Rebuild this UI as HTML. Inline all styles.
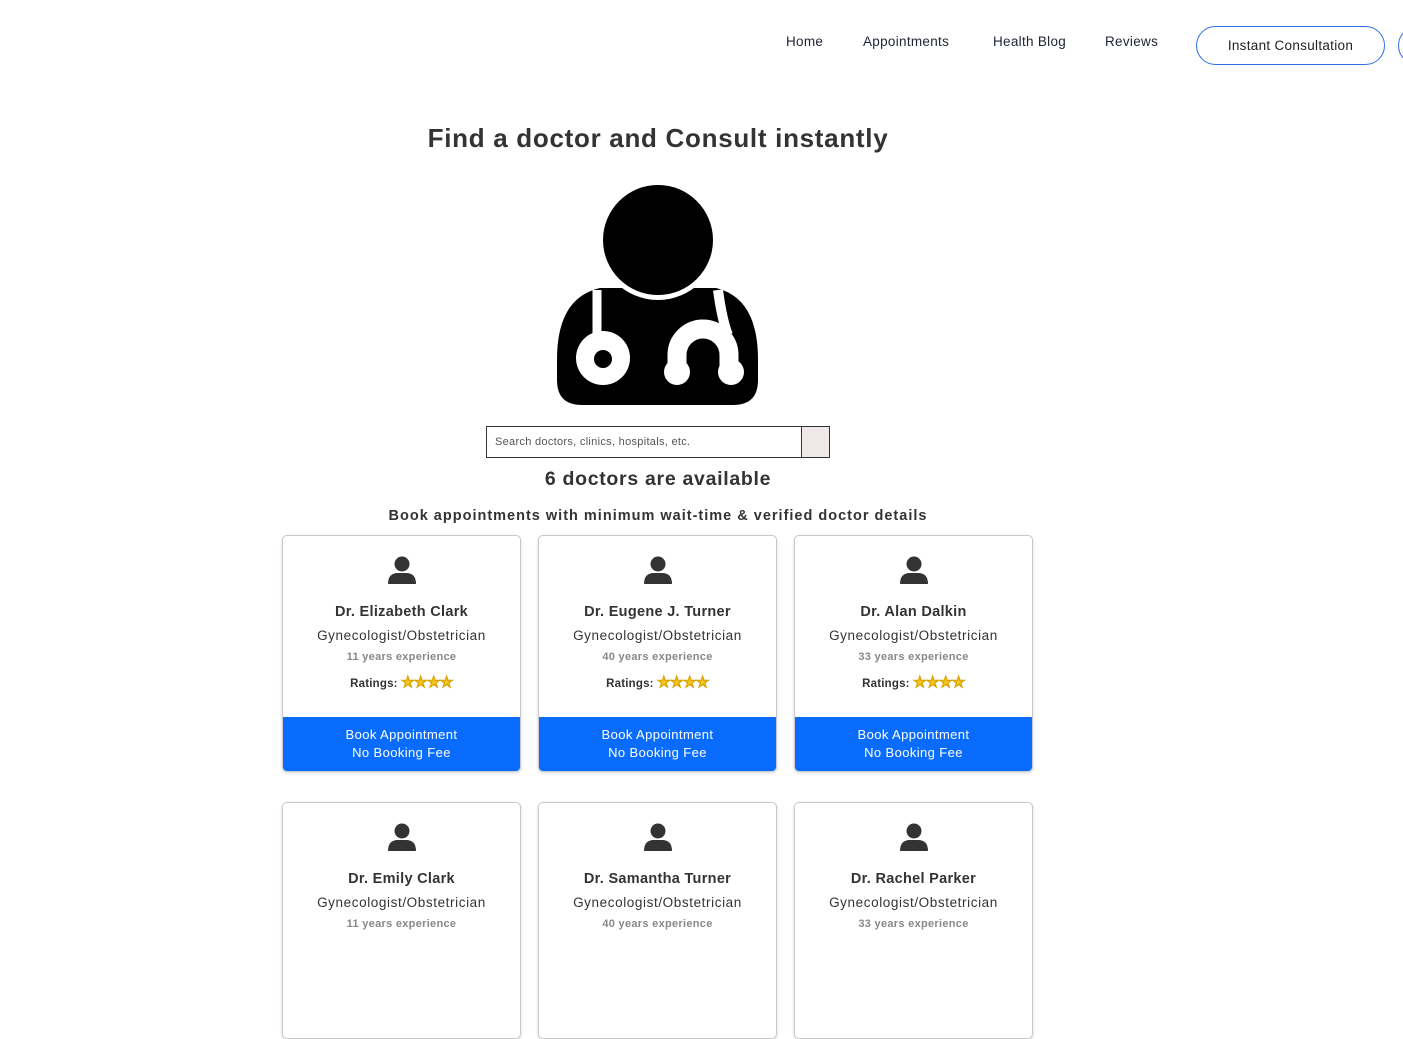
<!DOCTYPE html>
<html><head><meta charset="utf-8">
<style>
*{margin:0;padding:0;box-sizing:border-box}
body{width:1403px;height:930px;overflow:hidden;background:#fff;font-family:"Liberation Sans",sans-serif;color:#333;position:relative}
.nav a{position:absolute;top:34px;font-size:13.5px;color:#1e2433;text-decoration:none;letter-spacing:.3px}
.btn1{position:absolute;left:1196px;top:26px;width:189px;height:39px;border:1.3px solid #2f6fe6;border-radius:20px;font-size:13.5px;color:#222;text-align:center;line-height:37px;letter-spacing:.3px}
.btn2{position:absolute;left:1398px;top:26px;width:40px;height:39px;border:1.3px solid #2f6fe6;border-radius:20px}
h1{position:absolute;top:123px;left:0;width:1316px;text-align:center;font-size:26px;font-weight:bold;color:#333;letter-spacing:.7px}
.search{position:absolute;left:486px;top:426px;width:316px;height:32px;border:1px solid #333;font-size:11px;color:#555;padding:9px 8px;letter-spacing:.3px}
.sbtn{position:absolute;left:801px;top:426px;width:29px;height:32px;border:1px solid #333;background:#eee8e8}
.avail{position:absolute;top:468px;left:0;width:1316px;text-align:center;font-size:19.5px;font-weight:bold;color:#333;letter-spacing:.7px}
.sub{position:absolute;top:508px;left:0;width:1316px;text-align:center;font-size:14.5px;font-weight:bold;color:#333;letter-spacing:1px}
.card{position:absolute;width:239px;height:237px;border:1px solid #c8c8c8;border-radius:5px;box-shadow:0 1px 3px rgba(0,0,0,.15);text-align:center;overflow:hidden}
.card svg{position:absolute;left:105px;top:20px}
.nm{position:absolute;top:68px;width:100%;font-size:14.5px;font-weight:bold;color:#333;letter-spacing:.3px}
.sp{position:absolute;top:92px;width:100%;font-size:13.5px;color:#333;letter-spacing:.6px}
.ex{position:absolute;top:115px;width:100%;font-size:11px;font-weight:bold;color:#888;letter-spacing:.3px}
.rt{position:absolute;top:137px;width:100%;font-size:11.5px;font-weight:bold;color:#333;letter-spacing:.2px}
.rt span{color:#f5c518;font-size:15px;-webkit-text-stroke:.6px #d9a400;letter-spacing:-.5px}
.bk{position:absolute;top:181px;left:0;width:100%;height:55px;background:#0a6cff;color:#fff;font-size:13px;line-height:18px;padding-top:9px;border-radius:0 0 4px 4px;letter-spacing:.4px}
</style></head><body>
<div class="nav"><a style="left:786px">Home</a><a style="left:863px">Appointments</a><a style="left:993px">Health Blog</a><a style="left:1105px">Reviews</a></div>
<div class="btn1">Instant Consultation</div><div class="btn2"></div>
<h1>Find a doctor and Consult instantly</h1>
<svg style="position:absolute;left:550px;top:180px" width="220" height="230" viewBox="550 180 220 230">
<path d="M557,360 C557,320 570,295 600,288 L716,288 C745,295 758,320 758,360 L758,380 Q758,405 733,405 L582,405 Q557,405 557,380 Z" fill="#000"/>
<circle cx="658" cy="240" r="60" fill="#fff"/>
<circle cx="658" cy="240" r="55" fill="#000"/>
<path d="M597,290 V338" stroke="#fff" stroke-width="9"/>
<circle cx="603" cy="358" r="27" fill="#fff"/>
<circle cx="603" cy="359" r="9" fill="#000"/>
<path d="M718,290 Q722,320 728,335" stroke="#fff" stroke-width="10" fill="none"/>
<path d="M677,372 V355 A26,26 0 0 1 729,355 V372" stroke="#fff" stroke-width="19" fill="none"/>
<circle cx="677" cy="372" r="13" fill="#fff"/>
<circle cx="731" cy="372" r="13" fill="#fff"/>
</svg>
<div class="search">Search doctors, clinics, hospitals, etc.</div><div class="sbtn"></div>
<div class="avail">6 doctors are available</div>
<div class="sub">Book appointments with minimum wait-time &amp; verified doctor details</div>

<div class="card" style="left:282px;top:535px"><svg width="28" height="28" viewBox="0 0 28 28"><circle cx="14" cy="8" r="7.5" fill="#333"/><path d="M0,28 Q0,17 10,17 L18,17 Q28,17 28,28 Z" fill="#333"/></svg><div class="nm">Dr. Elizabeth Clark</div><div class="sp">Gynecologist/Obstetrician</div><div class="ex">11 years experience</div><div class="rt">Ratings: <span>★★★★</span></div><div class="bk">Book Appointment<br>No Booking Fee</div></div>
<div class="card" style="left:538px;top:535px"><svg width="28" height="28" viewBox="0 0 28 28"><circle cx="14" cy="8" r="7.5" fill="#333"/><path d="M0,28 Q0,17 10,17 L18,17 Q28,17 28,28 Z" fill="#333"/></svg><div class="nm">Dr. Eugene J. Turner</div><div class="sp">Gynecologist/Obstetrician</div><div class="ex">40 years experience</div><div class="rt">Ratings: <span>★★★★</span></div><div class="bk">Book Appointment<br>No Booking Fee</div></div>
<div class="card" style="left:794px;top:535px"><svg width="28" height="28" viewBox="0 0 28 28"><circle cx="14" cy="8" r="7.5" fill="#333"/><path d="M0,28 Q0,17 10,17 L18,17 Q28,17 28,28 Z" fill="#333"/></svg><div class="nm">Dr. Alan Dalkin</div><div class="sp">Gynecologist/Obstetrician</div><div class="ex">33 years experience</div><div class="rt">Ratings: <span>★★★★</span></div><div class="bk">Book Appointment<br>No Booking Fee</div></div>

<div class="card" style="left:282px;top:802px"><svg width="28" height="28" viewBox="0 0 28 28"><circle cx="14" cy="8" r="7.5" fill="#333"/><path d="M0,28 Q0,17 10,17 L18,17 Q28,17 28,28 Z" fill="#333"/></svg><div class="nm">Dr. Emily Clark</div><div class="sp">Gynecologist/Obstetrician</div><div class="ex">11 years experience</div></div>
<div class="card" style="left:538px;top:802px"><svg width="28" height="28" viewBox="0 0 28 28"><circle cx="14" cy="8" r="7.5" fill="#333"/><path d="M0,28 Q0,17 10,17 L18,17 Q28,17 28,28 Z" fill="#333"/></svg><div class="nm">Dr. Samantha Turner</div><div class="sp">Gynecologist/Obstetrician</div><div class="ex">40 years experience</div></div>
<div class="card" style="left:794px;top:802px"><svg width="28" height="28" viewBox="0 0 28 28"><circle cx="14" cy="8" r="7.5" fill="#333"/><path d="M0,28 Q0,17 10,17 L18,17 Q28,17 28,28 Z" fill="#333"/></svg><div class="nm">Dr. Rachel Parker</div><div class="sp">Gynecologist/Obstetrician</div><div class="ex">33 years experience</div></div>
</body></html>
